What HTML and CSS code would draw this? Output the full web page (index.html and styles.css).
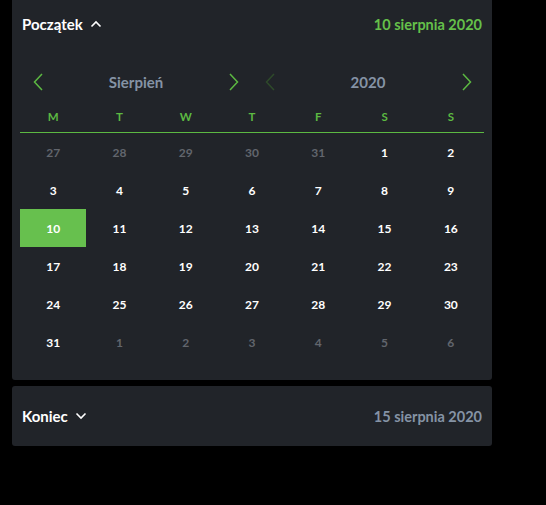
FILE: index.html
```html
<!DOCTYPE html>
<html lang="pl">
<head>
<meta charset="utf-8">
<link rel="stylesheet" href="styles.css">
</head>
<body>
<div class="wrap">
  <section class="card card-open">
    <header class="card-head">
      <div class="title">Początek
        <svg class="caret" width="12" height="8" viewBox="0 0 12 8"><path d="M1.5 6.5 L6 2 L10.5 6.5" fill="none" stroke="#fff" stroke-width="1.6"/></svg>
      </div>
      <div class="value value-active">10 sierpnia 2020</div>
    </header>
    <div class="cal">
      <div class="nav">
        <div class="nav-half">
          <button class="arrow"><svg width="10" height="18" viewBox="0 0 10 18"><path d="M9 1 L1.5 9 L9 17" fill="none" stroke="#5cb942" stroke-width="1.5"/></svg></button>
          <span class="nav-label">Sierpień</span>
          <button class="arrow"><svg width="10" height="18" viewBox="0 0 10 18"><path d="M1 1 L8.5 9 L1 17" fill="none" stroke="#5cb942" stroke-width="1.5"/></svg></button>
        </div>
        <div class="nav-half">
          <button class="arrow"><svg width="10" height="18" viewBox="0 0 10 18"><path d="M9 1 L1.5 9 L9 17" fill="none" stroke="#2e4a2a" stroke-width="1.5"/></svg></button>
          <span class="nav-label">2020</span>
          <button class="arrow"><svg width="10" height="18" viewBox="0 0 10 18"><path d="M1 1 L8.5 9 L1 17" fill="none" stroke="#5cb942" stroke-width="1.5"/></svg></button>
        </div>
      </div>
      <div class="weekdays">
        <span>M</span><span>T</span><span>W</span><span>T</span><span>F</span><span>S</span><span>S</span>
      </div>
      <div class="days">
        <span class="muted">27</span><span class="muted">28</span><span class="muted">29</span><span class="muted">30</span><span class="muted">31</span><span>1</span><span>2</span>
        <span>3</span><span>4</span><span>5</span><span>6</span><span>7</span><span>8</span><span>9</span>
        <span class="sel">10</span><span>11</span><span>12</span><span>13</span><span>14</span><span>15</span><span>16</span>
        <span>17</span><span>18</span><span>19</span><span>20</span><span>21</span><span>22</span><span>23</span>
        <span>24</span><span>25</span><span>26</span><span>27</span><span>28</span><span>29</span><span>30</span>
        <span>31</span><span class="muted">1</span><span class="muted">2</span><span class="muted">3</span><span class="muted">4</span><span class="muted">5</span><span class="muted">6</span>
      </div>
    </div>
  </section>
  <section class="card card-closed">
    <header class="card-head">
      <div class="title">Koniec
        <svg class="caret" width="12" height="8" viewBox="0 0 12 8"><path d="M1.5 1.5 L6 6 L10.5 1.5" fill="none" stroke="#fff" stroke-width="1.6"/></svg>
      </div>
      <div class="value">15 sierpnia 2020</div>
    </header>
  </section>
</div>
</body>
</html>
```
FILE: styles.css
```css
html, body {
  margin: 0;
  padding: 0;
  background: #000;
}
body {
  font-family: "Lato", "Liberation Sans", sans-serif;
  color: #fff;
}
.wrap {
  width: 480px;
  padding: 0 0 0 12px;
  display: flex;
  flex-direction: column;
  gap: 6px;
}
.card {
  background: #212429;
  border-radius: 3px;
}
.card-open {
  border-radius: 0 0 3px 3px;
  padding-bottom: 19px;
}
.card-head {
  display: flex;
  justify-content: space-between;
  align-items: center;
  height: 48px;
  padding: 0 10px;
}
.card-closed .card-head {
  height: 60px;
}
.title {
  font-weight: 700;
  font-size: 15px;
  display: flex;
  align-items: center;
  gap: 7px;
}
.value {
  font-weight: 700;
  font-size: 14.5px;
  color: #8593a5;
}
.value-active {
  color: #65c04a;
}
.cal {
  padding: 16px 8px 0 8px;
}
.nav {
  display: grid;
  grid-template-columns: 1fr 1fr;
  height: 36px;
}
.nav-half {
  display: flex;
  justify-content: space-between;
  align-items: center;
}
.arrow {
  width: 35px;
  height: 36px;
  background: none;
  border: 0;
  padding: 0;
  display: flex;
  align-items: center;
  justify-content: center;
}
.nav-label {
  font-weight: 700;
  font-size: 15px;
  color: #8593a5;
}
.weekdays {
  display: grid;
  grid-template-columns: repeat(7, 1fr);
  height: 32px;
  align-items: center;
  border-bottom: 1px solid #5cb942;
}
.weekdays span {
  text-align: center;
  font-weight: 700;
  font-size: 11.5px;
  color: #5cb942;
}
.days {
  display: grid;
  grid-template-columns: repeat(7, 1fr);
  grid-auto-rows: 38px;
}
.days span {
  display: flex;
  align-items: center;
  justify-content: center;
  font-weight: 700;
  font-size: 12px;
  color: #fff;
}
.days span.muted {
  color: #62666d;
}
.days span.sel {
  background: #67c04e;
}
```
